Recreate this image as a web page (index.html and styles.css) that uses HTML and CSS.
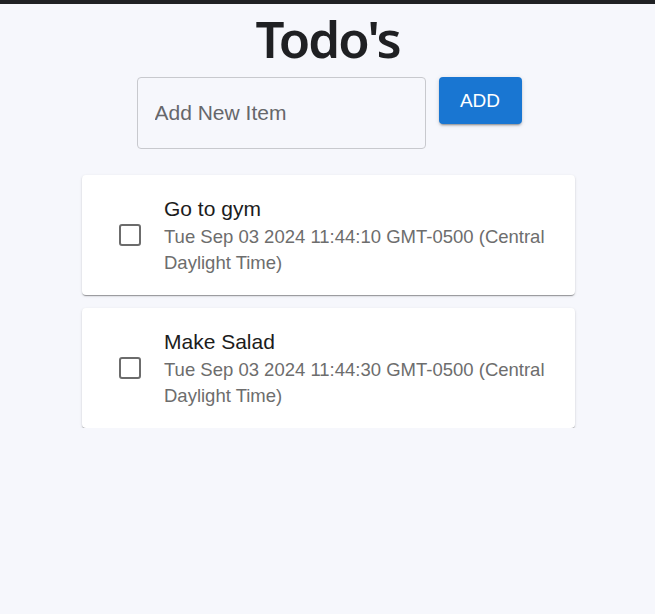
FILE: index.html
```html
<!DOCTYPE html>
<html>
<head>
<meta charset="utf-8">
<link rel="stylesheet" href="styles.css">
</head>
<body>
<div class="topbar"></div>
<main class="app">
  <h1 class="title">Todo's</h1>
  <form class="add-form">
    <input class="add-input" type="text" placeholder="Add New Item">
    <button class="add-btn" type="button">ADD</button>
  </form>
  <ul class="list">
    <li class="card">
      <span class="check"></span>
      <div class="text">
        <div class="name">Go to gym</div>
        <div class="date">Tue Sep 03 2024 11:44:10 GMT-0500 (Central Daylight Time)</div>
      </div>
    </li>
    <li class="card">
      <span class="check"></span>
      <div class="text">
        <div class="name">Make Salad</div>
        <div class="date">Tue Sep 03 2024 11:44:30 GMT-0500 (Central Daylight Time)</div>
      </div>
    </li>
  </ul>
</main>
</body>
</html>
```
FILE: styles.css
```css
html, body {
  margin: 0;
  background: #f6f7fc;
  font-family: "Liberation Sans", Arial, sans-serif;
}
.topbar {
  height: 4px;
  background: #202124;
}
.app {
  display: flex;
  flex-direction: column;
  align-items: center;
}
.title {
  margin: 1px 0 0;
  font-family: "Noto Sans", sans-serif;
  font-weight: 600;
  font-size: 51px;
  line-height: 66px;
  color: #1f2023;
  letter-spacing: -2px;
}
.add-form {
  display: flex;
  align-items: flex-start;
  gap: 13px;
  margin: 6px 0 0 3px;
}
.add-input {
  box-sizing: border-box;
  width: 289px;
  height: 72px;
  border: 1px solid #c8c9ce;
  border-radius: 4px;
  background: transparent;
  padding: 0 17px;
  font-family: "Liberation Sans", Arial, sans-serif;
  font-size: 21px;
  color: #333;
  outline: none;
}
.add-input::placeholder {
  color: #66676b;
}
.add-btn {
  box-sizing: border-box;
  width: 83px;
  height: 47px;
  border: none;
  border-radius: 4px;
  background: #1976d2;
  color: #fff;
  font-family: "Liberation Sans", Arial, sans-serif;
  font-size: 19px;
  box-shadow: 0 3px 1px -2px rgba(0,0,0,.2), 0 2px 2px 0 rgba(0,0,0,.14), 0 1px 5px 0 rgba(0,0,0,.12);
}
.list {
  list-style: none;
  margin: 26px 0 0 2px;
  padding: 0;
  display: flex;
  flex-direction: column;
  gap: 13px;
  width: 493px;
}
.card {
  box-sizing: border-box;
  height: 120px;
  background: #fff;
  border-radius: 4px;
  box-shadow: 0 2px 1px -1px rgba(0,0,0,.22), 0 1px 1px 0 rgba(0,0,0,.16), 0 1px 3px 0 rgba(0,0,0,.12);
  display: flex;
  align-items: center;
  padding: 0 20px 0 37px;
}
.check {
  flex: none;
  box-sizing: border-box;
  width: 22px;
  height: 22px;
  border: 2.5px solid #6c6c6c;
  border-radius: 3px;
  margin-right: 23px;
}
.text {
  display: flex;
  flex-direction: column;
  padding-bottom: 1px;
}
.name {
  font-size: 21px;
  line-height: 30px;
  color: #1c1c1c;
}
.date {
  font-size: 18.5px;
  line-height: 26px;
  color: #6d6d6d;
}
```
